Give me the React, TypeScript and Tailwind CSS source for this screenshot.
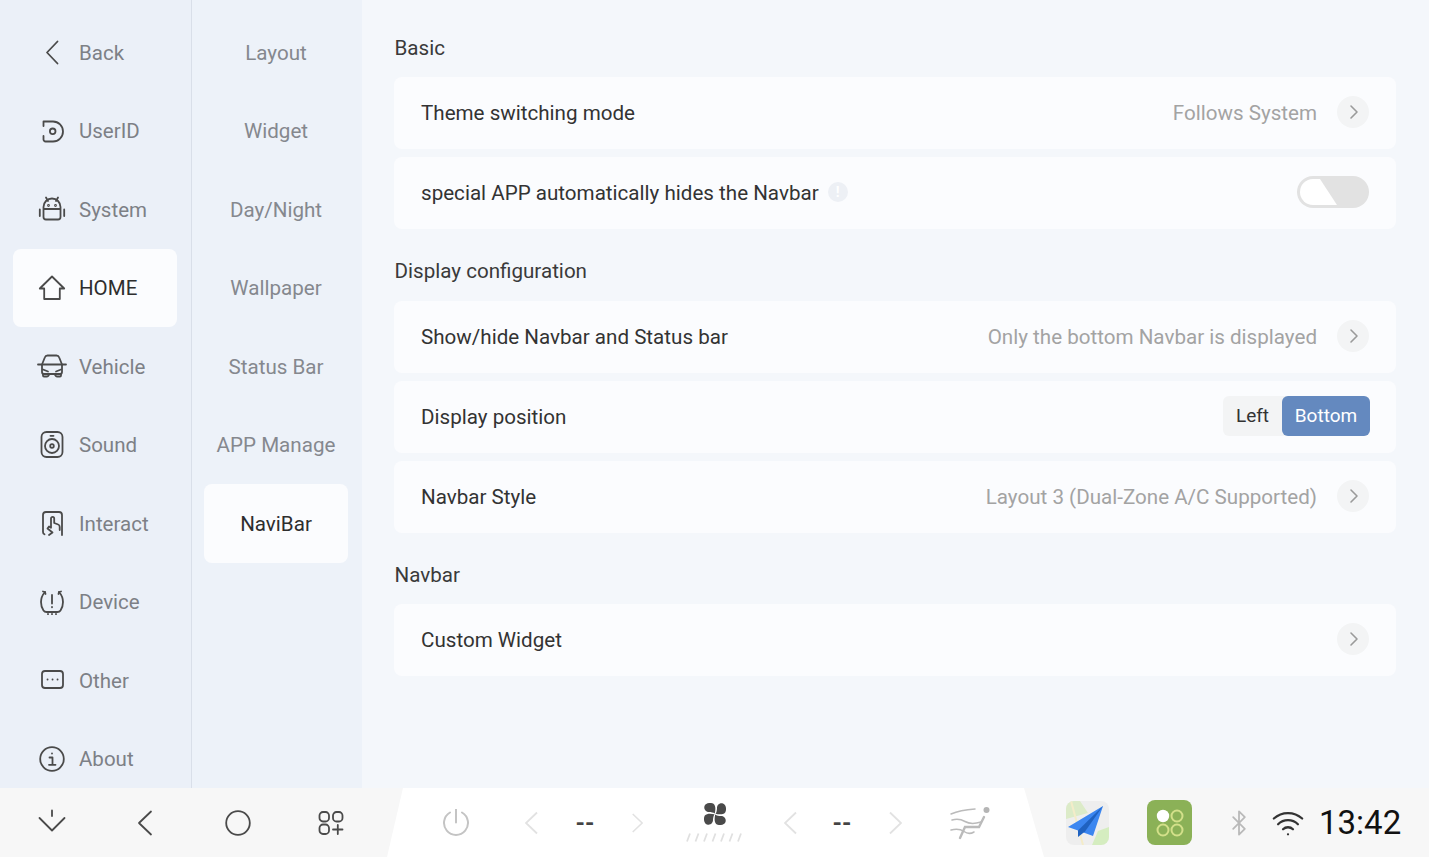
import { Bluetooth, ChevronRight, Wifi } from "lucide-react";
import type { ReactNode } from "react";

const ic = { fill: "none", stroke: "#4a4a4a", strokeWidth: 1.8, strokeLinecap: "round", strokeLinejoin: "round" } as const;

function Ico({ children }: { children: ReactNode }) {
  return (
    <svg width="28" height="28" viewBox="0 0 28 28" className="shrink-0 overflow-visible" {...ic}>
      {children}
    </svg>
  );
}

const menu: { label: string; active?: boolean; icon: ReactNode }[] = [
  { label: "Back", icon: <path d="M19.500 3.500 9 14.500l10.500 11" /> },
  {
    label: "UserID",
    icon: (
      <>
        <path d="M5.500 9V4.500H15a10 10 0 0 1 0 20H7.500a2 2 0 0 1-2-2V19" />
        <circle cx="14.700" cy="14.300" r="2.800" />
      </>
    ),
  },
  {
    label: "System",
    icon: (
      <>
        <path d="M5.500 14v-2a8.500 8.500 0 0 1 17 0v2M5.500 14h17v8a2.500 2.500 0 0 1-2.500 2.500H8A2.500 2.500 0 0 1 5.500 22z" />
        <path d="M8 2.500 10 6M20 2.500 18 6M1.800 14.500v6.500M26.200 14.500v6.500" />
        <circle cx="10.500" cy="10.500" r=".5" />
        <circle cx="17.500" cy="10.500" r=".5" />
      </>
    ),
  },
  { label: "HOME", active: true, icon: <path d="M14 2.500 1.800 14.500H6.200V25H21.800V14.500H26.200Z" /> },
  {
    label: "Vehicle",
    icon: (
      <>
        <path d="M4 12.500 6.800 5.500Q7.500 3.500 9.500 3.500h9Q20.500 3.500 21.200 5.500L24 12.500" />
        <path d="M0 12.500H28M4 12.500V20q0 2 2 2h16q2 0 2-2v-7.500" />
        <path d="M5 22v1.500q0 1 1 1h3q1 0 1.500-1l1-1.500M23 22v1.500q0 1-1 1h-3q-1 0-1.500-1l-1-1.500M5 17.500l5 2M23 17.500l-5 2" />
      </>
    ),
  },
  {
    label: "Sound",
    icon: (
      <>
        <rect x="3.500" y="1" width="21" height="25" rx="5" />
        <path d="M12.500 4.800h3" />
        <circle cx="14" cy="15" r="7" />
        <circle cx="14" cy="15" r="1.800" />
      </>
    ),
  },
  {
    label: "Interact",
    icon: (
      <>
        <path d="M5 19V6a3 3 0 0 1 3-3h13a3 3 0 0 1 3 3v20M5 19v4a2.500 2.500 0 0 0 1.500 2.300" />
        <path d="M11 26l3.500-2.500-5-4 1.500-2 2 1.300V9.500a1.600 1.600 0 0 1 3.200 0V14l4 1.500q1.500.5 1.500 2.500v3" />
      </>
    ),
  },
  {
    label: "Device",
    icon: (
      <>
        <path d="M7 4Q3 8.500 3 14q0 5 2.500 8.500Q6.500 24 8.500 24H19.500Q21.500 24 22.500 22.500 25 19 25 14 25 8.500 21 4" />
        <path d="M5 3.500l2 .5.500 2M23 3.500 21 4l-.5 2M14 7v8.500M14 19v.3M10 26v.2M14 26v.2M18 26v.2" />
      </>
    ),
  },
  {
    label: "Other",
    icon: (
      <>
        <rect x="4" y="5" width="21" height="17" rx="3" />
        <path d="M9.500 13.500h.1M14.500 13.500h.1M19.500 13.500h.1" />
      </>
    ),
  },
  {
    label: "About",
    icon: (
      <>
        <circle cx="14" cy="14" r="11.800" />
        <path d="M14 8.300v.2M11.500 12.500H14.500V19.500M11 19.800h6.500" />
      </>
    ),
  },
];

const sub = ["Layout", "Widget", "Day/Night", "Wallpaper", "Status Bar", "APP Manage", "NaviBar"];

function Arrow() {
  return (
    <span className="mb-[2px] ml-5 flex h-8 w-8 shrink-0 items-center justify-center rounded-full bg-[#f3f4f5] pl-[2px]">
      <ChevronRight size={24} strokeWidth={1.600} color="#9a9a9a" />
    </span>
  );
}

function Card({ label, value, arrow, children }: { label: string; value?: string; arrow?: boolean; children?: ReactNode }) {
  return (
    <div className="flex h-[72px] items-center rounded-lg bg-[#fbfcfe] px-[27px] text-[20.600px] text-[#333]">
      <span className="flex-1">{label}</span>
      {value && <span className="text-[#a3a3a3]">{value}</span>}
      {arrow && <Arrow />}
      {children}
    </div>
  );
}

function Chev({ right }: { right?: boolean }) {
  return (
    <svg width="14" height="24" viewBox="0 0 14 24" fill="none" stroke="#e2e2e2" strokeWidth="1.800">
      <path d={right ? "M2 1.500 13 12 2 22.500" : "M12 1.500 1 12 12 22.500"} />
    </svg>
  );
}

function Fan() {
  const blade = "M10.800 10.500C11.500 7 12 3 9.500.8 7-.8 1.500-.2.5 3-.5 6.500 2 9 5 9 7 9 9.500 9.500 10.800 10.500Z";
  return (
    <svg width="22" height="22" viewBox="0 0 22 22" fill="#4a4a4a" className="ml-[2px]">
      {[0, 90, 180, 270].map((r) => (
        <path key={r} d={blade} transform={`rotate(${r} 11 11)`} />
      ))}
    </svg>
  );
}

export default function App() {
  return (
    <div className="flex h-[857px] w-[1429px] flex-col overflow-hidden bg-[#f4f7fb] font-['Roboto',sans-serif]">
      <div className="flex h-[788px] shrink-0">
        <div className="w-[192px] shrink-0 border-r border-[#d9dfe9] bg-[#ebf0f8] px-[13px] pt-[13px]">
          {menu.map((m) => (
            <div
              key={m.label}
              className={`flex h-[78.500px] w-[164px] items-center gap-[13px] rounded-lg pl-[25px] text-[20.500px] ${
                m.active ? "bg-[#fbfcfe] text-[#2e2e2e]" : "text-[#7d8086]"
              }`}
            >
              <Ico>{m.icon}</Ico>
              <span className="pt-[2px]">{m.label}</span>
            </div>
          ))}
        </div>
        <div className="w-[170px] shrink-0 bg-[#edf2f9] pl-3 pt-[13px]">
          {sub.map((s) => (
            <div
              key={s}
              className={`flex h-[78.500px] w-[144px] items-center justify-center rounded-lg pt-[2px] text-[20.600px] ${
                s === "NaviBar" ? "bg-[#fbfcfe] text-[#2e2e2e]" : "text-[#85888e]"
              }`}
            >
              {s}
            </div>
          ))}
        </div>
        <div className="flex-1 pl-8 pr-[33px] pt-[33px] text-[20.600px] text-[#3a3a3a]">
          <div className="mb-[14px] h-[30px] pl-[.5px] leading-[30px]">Basic</div>
          <div className="flex flex-col gap-2">
            <Card label="Theme switching mode" value="Follows System" arrow />
            <div className="flex h-[72px] items-center rounded-lg bg-[#fbfcfe] px-[27px] text-[#333]">
              <span>special APP automatically hides the Navbar</span>
              <span className="mb-[2px] ml-[9px] flex h-5 w-5 items-center justify-center rounded-full bg-[#edf0f5] text-[14px] font-bold leading-none text-white">!</span>
              <span className="relative mb-[2px] ml-auto h-8 w-[72px] rounded-full bg-[#e2e2e2]">
                <span className="absolute left-[3px] top-[3px] h-[26px] w-[37px] rounded-l-full bg-white [clip-path:polygon(0_0,54%_0,100%_100%,0_100%)]" />
              </span>
            </div>
          </div>
          <div className="mb-[15px] mt-[27px] h-[30px] pl-[.5px] leading-[30px]">Display configuration</div>
          <div className="flex flex-col gap-2">
            <Card label="Show/hide Navbar and Status bar" value="Only the bottom Navbar is displayed" arrow />
            <Card label="Display position">
              <div className="-mr-px mb-[2px] flex h-10 w-[147px] items-center rounded-md bg-[#f3f4f5] text-[19px]">
                <span className="w-[59px] text-center text-[#333]">Left</span>
                <span className="flex h-10 w-[88px] items-center justify-center rounded-md bg-[#6489bf] text-white">Bottom</span>
              </div>
            </Card>
            <Card label="Navbar Style" value="Layout 3 (Dual-Zone A/C Supported)" arrow />
          </div>
          <div className="mb-[14px] mt-[27px] h-[30px] pl-[.5px] leading-[30px]">Navbar</div>
          <Card label="Custom Widget" arrow />
        </div>
      </div>

      <div className="flex flex-1 items-center bg-[#f7f7f7]">
        <div className="flex w-[387px] shrink-0 items-center pl-[5.500px]">
          <div className="flex w-[93px] justify-center">
            <svg width="28" height="28" viewBox="0 0 28 28" {...ic}>
              <path d="M1.500 9 14 21.500 26.500 9M14 1.500V7" />
            </svg>
          </div>
          <div className="flex w-[93px] justify-center">
            <svg width="28" height="28" viewBox="0 0 28 28" {...ic}>
              <path d="M20 2.500 8 14l12 11.500" />
            </svg>
          </div>
          <div className="flex w-[93px] justify-center">
            <svg width="28" height="28" viewBox="0 0 28 28" {...ic}>
              <circle cx="14" cy="14" r="11.800" />
            </svg>
          </div>
          <div className="flex w-[93px] justify-center">
            <svg width="28" height="28" viewBox="0 0 28 28" {...ic}>
              <rect x="2.500" y="3" width="9.500" height="9.500" rx="3.500" />
              <rect x="16" y="3" width="9.500" height="9.500" rx="3.500" />
              <rect x="2.500" y="15.500" width="9.500" height="9.500" rx="3.500" />
              <path d="M16 20.500h9.500M20.800 16v9" />
            </svg>
          </div>
        </div>

        <div className="flex h-full w-[657px] shrink-0 items-center bg-white [clip-path:polygon(16px_0,637px_0,100%_100%,0_100%)]">
          <div className="flex w-[138px] justify-center">
            <svg width="28" height="28" viewBox="0 0 28 28" fill="none" stroke="#c4c4c4" strokeWidth="2" strokeLinecap="round">
              <path d="M8 3.500a12 12 0 1 0 12 0M14 .5v13" />
            </svg>
          </div>
          <div className="flex w-[14px] justify-center"><Chev /></div>
          <div className="w-[92px] text-center text-[24px] font-bold leading-none text-[#444]">--</div>
          <div className="flex w-[12px] justify-center"><Chev right /></div>
          <div className="flex w-[141px] flex-col items-center">
            <Fan />
            <svg width="60" height="9" viewBox="0 0 60 9" fill="none" stroke="#e0e0e0" strokeWidth="1.800" className="ml-[2px] mt-2">
              <path d="M2 8.500 5 .5M10.500 8.500l3-8M19 8.500l3-8M27.500 8.500l3-8M36 8.500l3-8M44.500 8.500l3-8M53 8.500l3-8" />
            </svg>
          </div>
          <div className="flex w-[14px] justify-center"><Chev /></div>
          <div className="w-[90px] pr-[2px] text-center text-[24px] font-bold leading-none text-[#444]">--</div>
          <div className="flex w-[14px] justify-center"><Chev right /></div>
          <div className="flex w-[136px] justify-center">
            <svg width="40" height="34" viewBox="0 0 40 34" fill="none" stroke="#bbb" strokeWidth="1.500" strokeLinecap="round">
              <circle cx="36.500" cy="4" r="3" fill="#b5b5b5" stroke="none" />
              <path d="M34 11 29 21H15L10 32" strokeWidth="2.400" />
              <path d="M1 8Q10 4 25 3M2 14Q9 12 15 15.500T31 16M1 24Q9 22 14 25.500T24 26" />
            </svg>
          </div>
        </div>

        <div className="flex flex-1 items-center">
          <div className="ml-[22px] h-[44px] w-[43px] overflow-hidden rounded-lg bg-[#eeeeee]">
            <svg width="43" height="44" viewBox="0 0 43 44">
              <path d="M0 0h14l8 12L0 18z" fill="#dcebc8" />
              <path d="M26 44l6-14 11-4v18z" fill="#d5edc0" />
              <path d="M5 0l12 44" stroke="#f4ecc9" strokeWidth="2" />
              <path d="M37 5 2 26 12 29.500 27 35z" fill="#3b86f0" />
              <path d="M37 5 12 29.500 12 36 19 30.500z" fill="#1f62c0" />
            </svg>
          </div>
          <div className="ml-[38px] flex h-[45px] w-[45px] items-center justify-center rounded-lg bg-[#8bb157]">
            <svg width="30" height="30" viewBox="0 0 30 30" fill="none" stroke="#d3e08a" strokeWidth="2">
              <circle cx="8" cy="8" r="6.200" fill="#fff" stroke="none" />
              <circle cx="22" cy="8" r="5.500" />
              <circle cx="8" cy="22" r="5.500" />
              <circle cx="22" cy="22" r="5.500" />
            </svg>
          </div>
          <Bluetooth size={28} strokeWidth={1.500} color="#b9b9b9" className="ml-[33px]" />
          <Wifi size={34} strokeWidth={1.600} color="#333" className="ml-[18px]" />
          <span className="ml-[14px] text-[33px] leading-none text-[#111]">13:42</span>
        </div>
      </div>
    </div>
  );
}
